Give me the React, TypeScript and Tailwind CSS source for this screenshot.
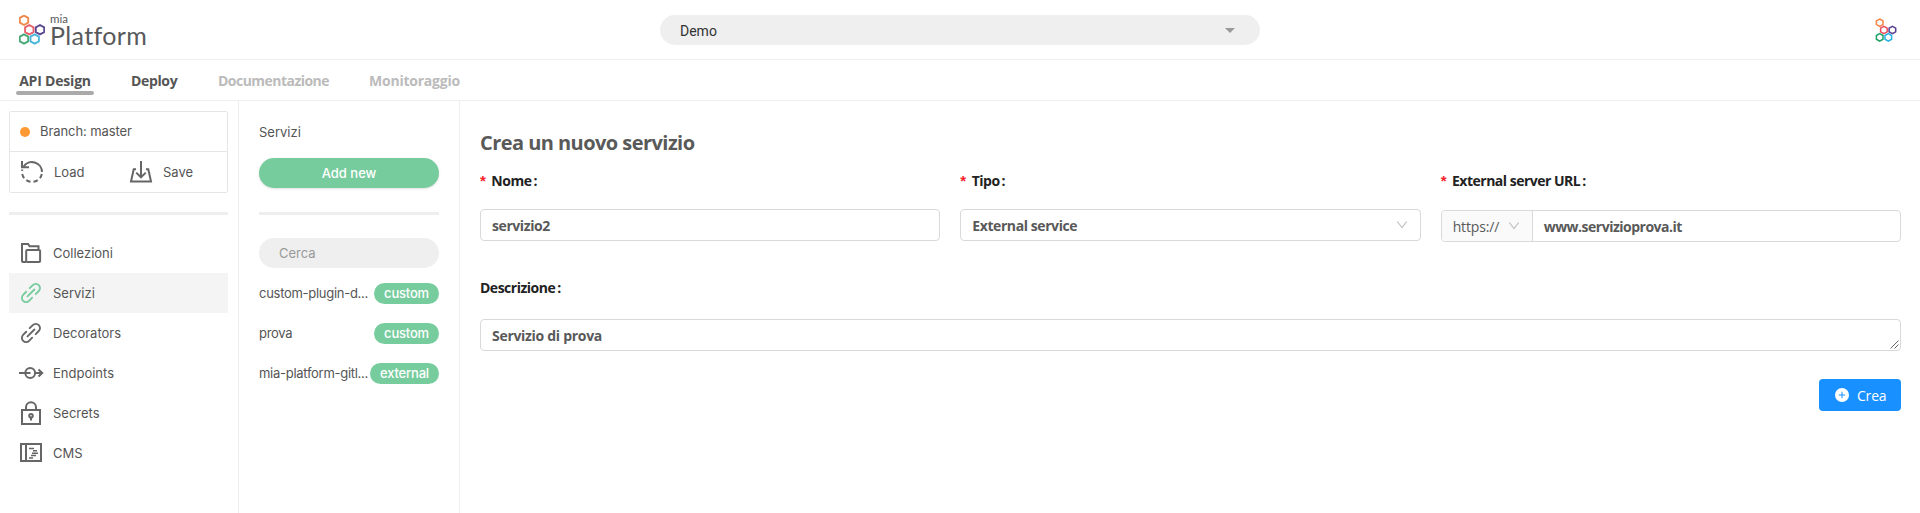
import React from "react";

const hexes: [number, number, string][] = [
  [5, 5.3, "#f0894a"],
  [10.3, 14.7, "#e8606a"],
  [21, 14.7, "#5c4a93"],
  [5, 24, "#4aa976"],
  [15.7, 24, "#48b6dc"],
];

const smallHexes: [number, number, string][] = [
  [4.7, 4.7, "#f58345"],
  [8.9, 12, "#ea4a5e"],
  [17.4, 12, "#593d90"],
  [4.7, 19.4, "#1fa266"],
  [13.3, 19.4, "#27b3e3"],
];

function hexPath(cx: number, cy: number, rx: number, ry: number) {
  return `M${cx} ${cy - ry}L${cx + rx} ${cy - ry / 2}V${cy + ry / 2}L${cx} ${cy + ry}L${cx - rx} ${cy + ry / 2}V${cy - ry / 2}Z`;
}

function Logo() {
  return (
    <div className="flex items-start">
      <svg width="26" height="30" viewBox="0 0 26 30" fill="none" strokeWidth="1.9" strokeLinejoin="round">
        {hexes.map(([x, y, c]) => (
          <path key={c} d={hexPath(x, y, 4.2, 4.7)} stroke={c} />
        ))}
      </svg>
      <div className="flex flex-col pl-[5px] font-['Lato'] text-[#58595b]">
        <span className="-mt-px h-[10px] text-[11.5px] leading-[10px]">mia</span>
        <span className="h-[22px] text-[25px] leading-[22px] tracking-[0.35px]">Platform</span>
      </div>
    </div>
  );
}

function SmallLogo() {
  return (
    <svg width="23" height="25" viewBox="0 0 23 25" fill="none" strokeWidth="1.5">
      {smallHexes.map(([x, y, c]) => (
        <path key={c} d={hexPath(x, y, 3.3, 3.7)} stroke={c} />
      ))}
    </svg>
  );
}

type IconProps = { children: React.ReactNode; className?: string };
function Icon({ children, className = "text-[#666]" }: IconProps) {
  return (
    <svg width="24" height="24" viewBox="0 0 24 24" fill="none" stroke="currentColor" strokeWidth="2" className={`shrink-0 ${className}`}>
      {children}
    </svg>
  );
}

const LinkShape = () => (
  <g strokeLinecap="round" transform="translate(-0.2 0.8) scale(0.93)">
    <path d="M8.3 15.7L15.7 8.3" />
    <path d="M10.6 6.9L14 3.5a4.5 4.5 0 0 1 6.4 0a4.5 4.5 0 0 1 0 6.4L17.1 13.3" />
    <path d="M6.9 10.7L3.6 14.1a4.5 4.5 0 0 0 0 6.4a4.5 4.5 0 0 0 6.4 0L13.3 17.1" />
  </g>
);

const menu = [
  {
    label: "Collezioni",
    icon: (
      <Icon>
        <path d="M6 21H3.6A1.6 1.6 0 0 1 2 19.4V3h6l1.6 2.200h8.900V8" />
        <rect x="6.200" y="9" width="13.900" height="12" rx="1" />
      </Icon>
    ),
  },
  { label: "Servizi", active: true, icon: <Icon className="text-[#77cc9e]"><LinkShape /></Icon> },
  { label: "Decorators", icon: <Icon><LinkShape /></Icon> },
  {
    label: "Endpoints",
    icon: (
      <Icon className="overflow-visible text-[#666]">
        <circle cx="10.200" cy="12" r="4.900" />
        <path d="M-1 12h11.500M15 12h7.500M18.500 8.500l3.700 3.500L18.500 15.500" />
      </Icon>
    ),
  },
  {
    label: "Secrets",
    icon: (
      <Icon>
        <rect x="2" y="9" width="18" height="14" />
        <path d="M6 9V6.200a5 5 0 0 1 10 0V9" />
        <circle cx="11" cy="14.800" r="1.800" />
        <path d="M11 16.500V19.500" />
      </Icon>
    ),
  },
  {
    label: "CMS",
    icon: (
      <Icon>
        <rect x="1" y="3" width="20" height="17" />
        <path d="M6 3v17" />
        <path d="M9 7.500H14M13 9.800H17M12 12.200H18M11 14.600H16M9 17H13" strokeWidth="1.500" />
      </Icon>
    ),
  },
];

const services = [
  { name: "custom-plugin-d...", tag: "custom" },
  { name: "prova", tag: "custom" },
  { name: "mia-platform-gitl...", tag: "external" },
];

function Chevron() {
  return (
    <svg width="12" height="10" viewBox="0 0 12 10" fill="none" stroke="#bfbfbf" strokeWidth="1.2">
      <path d="M1.300 1.500L6 7.500L10.700 1.500" />
    </svg>
  );
}

function Label({ text, required }: { text: string; required?: boolean }) {
  return (
    <div className="flex h-5 items-center text-[14px] font-bold leading-5 tracking-[-0.5px] text-[#222]">
      {required && <span className="mr-[6px] font-['Liberation_Sans'] text-[15px] text-[#f5222d]">*</span>}
      {text}
      <span className="ml-[2px]">:</span>
    </div>
  );
}

const field = "flex h-8 items-center rounded-[4px] border border-[#d9d9d9] bg-white text-[14px] font-bold tracking-[-0.42px] text-[#595959]";

export default function App() {
  return (
    <div className="flex h-[513px] w-full flex-col overflow-hidden bg-white font-['Open_Sans','Noto_Sans',sans-serif]">
      <header className="grid h-[60px] shrink-0 grid-cols-[1fr_600px_1fr] border-b border-[#eee]">
        <div className="pl-[19px] pt-[15px]"><Logo /></div>
        <div className="mt-[15px] flex h-[30px] items-center justify-between rounded-full bg-[#efefef] pl-5 pr-[25px]">
          <span className="pt-px font-['Roboto'] text-[14px] leading-5 text-[#333]">Demo</span>
          <span className="border-x-[5px] border-t-[5px] border-x-transparent border-t-[#999]" />
        </div>
        <div className="flex justify-end pr-[22px] pt-[18px]"><SmallLogo /></div>
      </header>

      <nav className="flex h-[41px] shrink-0 border-b border-[#eee] pl-4 text-[14px] font-bold leading-5">
        <div className="flex w-[78px] flex-col items-center pt-[11px] text-[#555]">
          <span className="whitespace-nowrap tracking-[-0.2px]">API Design</span>
          <span className="h-1 w-full rounded-full bg-[#aaa]" />
        </div>
        <span className="ml-[37px] w-[87px] pt-[11px] tracking-[-0.35px] text-[#555]">Deploy</span>
        <span className="w-[151px] pt-[11px] tracking-[-0.53px] text-[#bbb]">Documentazione</span>
        <span className="pt-[11px] tracking-[-0.23px] text-[#bbb]">Monitoraggio</span>
      </nav>

      <div className="flex min-h-0 flex-1">
        <aside className="w-[239px] shrink-0 border-r border-[#eee] pl-[9px] pr-[10px] pt-[10px] font-['Inter',sans-serif] text-[13px] text-[#555]">
          <div className="rounded-[2px] border border-[#e6e6e6]">
            <div className="flex h-10 items-center border-b border-[#e6e6e6] pl-[10px]">
              <span className="size-[10px] rounded-full bg-[#ff9933]" />
              <span className="ml-[10px] tracking-[-0.08px]">Branch: master</span>
            </div>
            <div className="flex h-10 items-center">
              <div className="flex w-[109px] items-center pl-[10px]">
                <Icon>
                  <path d="M3.500 6.800A10 10 0 0 1 22 12" />
                  <path d="M22 12A10 10 0 1 1 2.300 9.500" strokeDasharray="4.500 3" strokeDashoffset="-2" />
                  <path d="M2 1V7.200H9" />
                </Icon>
                <span className="ml-[10px] pt-[2px]">Load</span>
              </div>
              <div className="flex items-center pl-[10px]">
                <Icon>
                  <path d="M7 9.300H4.700L2 21.500H22L19.300 9.300H17" />
                  <path d="M12 1V17M7.200 12.600L12 17.300L16.800 12.600" />
                </Icon>
                <span className="ml-[10px] pt-[2px]">Save</span>
              </div>
            </div>
          </div>
          <div className="mt-[19px] h-[3px] bg-[#eee]" />
          <ul className="mt-[18px]">
            {menu.map((m) => (
              <li key={m.label} className={`flex h-10 items-center pl-[11px] ${m.active ? "bg-[#f4f4f4]" : ""}`}>
                {m.icon}
                <span className="ml-[9px] pt-[2px]">{m.label}</span>
              </li>
            ))}
          </ul>
        </aside>

        <section className="w-[221px] shrink-0 border-r border-[#eee] px-5 pt-[21px] font-['Inter',sans-serif] text-[13px] text-[#555]">
          <div className="h-5 leading-5">Servizi</div>
          <button className="mt-4 block h-[30px] w-full rounded-full bg-[#77cc9e] pt-px font-medium text-white shadow-sm">Add new</button>
          <div className="mt-6 h-[3px] bg-[#eee]" />
          <div className="mb-[5px] mt-[23px] flex h-[30px] items-center rounded-full bg-[#efefef] pl-5 pt-px text-[#999]">Cerca</div>
          {services.map((s) => (
            <div key={s.name} className="flex h-10 items-center justify-between whitespace-nowrap pt-px">
              <span className="tracking-[-0.28px]">{s.name}</span>
              <span className={`flex h-[21px] shrink-0 items-center justify-center rounded-full bg-[#77cc9e] font-medium tracking-[-0.2px] text-white ${s.tag === "custom" ? "w-[65px]" : "w-[69px]"}`}>{s.tag}</span>
            </div>
          ))}
        </section>

        <main className="min-w-0 flex-1 pl-5 pr-[19px] pt-[28px]">
          <h1 className="h-7 text-[20px] font-bold leading-7 tracking-[-0.55px] text-[#595959]">Crea un nuovo servizio</h1>
          <div className="mt-[14px] grid grid-cols-3 gap-x-5">
            <div>
              <Label required text="Nome" />
              <div className={`mt-[18px] pl-[11px] ${field}`}>servizio2</div>
            </div>
            <div>
              <Label required text="Tipo" />
              <div className={`mt-[18px] justify-between pl-[11px] pr-3 ${field}`}>External service<Chevron /></div>
            </div>
            <div>
              <Label required text="External server URL" />
              <div className={`mt-[19px] overflow-hidden ${field}`}>
                <span className="flex h-full w-[91px] items-center justify-between border-r border-[#d9d9d9] bg-[#fafafa] pl-[11px] pr-3 font-normal tracking-[-0.15px]">https://<Chevron /></span>
                <span className="pl-[11px] pt-px tracking-[-0.5px]">www.servizioprova.it</span>
              </div>
            </div>
          </div>
          <div className="mt-9"><Label text="Descrizione" /></div>
          <div className={`relative mt-[21px] pl-[11px] ${field}`}>
            <span className="tracking-[-0.3px]">Servizio di prova</span>
            <svg width="9" height="9" viewBox="0 0 9 9" className="absolute bottom-px right-px" stroke="#666" strokeWidth="1">
              <path d="M0.500 8.500L8.500 0.500M4.500 8.500L8.500 4.500" />
            </svg>
          </div>
          <div className="mt-7 flex justify-end">
            <button className="flex h-8 w-[82px] items-center rounded-[4px] bg-[#1890ff] pl-4 text-[14px] tracking-[-0.2px] text-white">
              <svg width="14" height="14" viewBox="0 0 14 14">
                <circle cx="7" cy="7" r="7" fill="#fff" />
                <path d="M3.800 7H10.200M7 3.800V10.200" stroke="#1890ff" />
              </svg>
              <span className="ml-2">Crea</span>
            </button>
          </div>
        </main>
      </div>
    </div>
  );
}
